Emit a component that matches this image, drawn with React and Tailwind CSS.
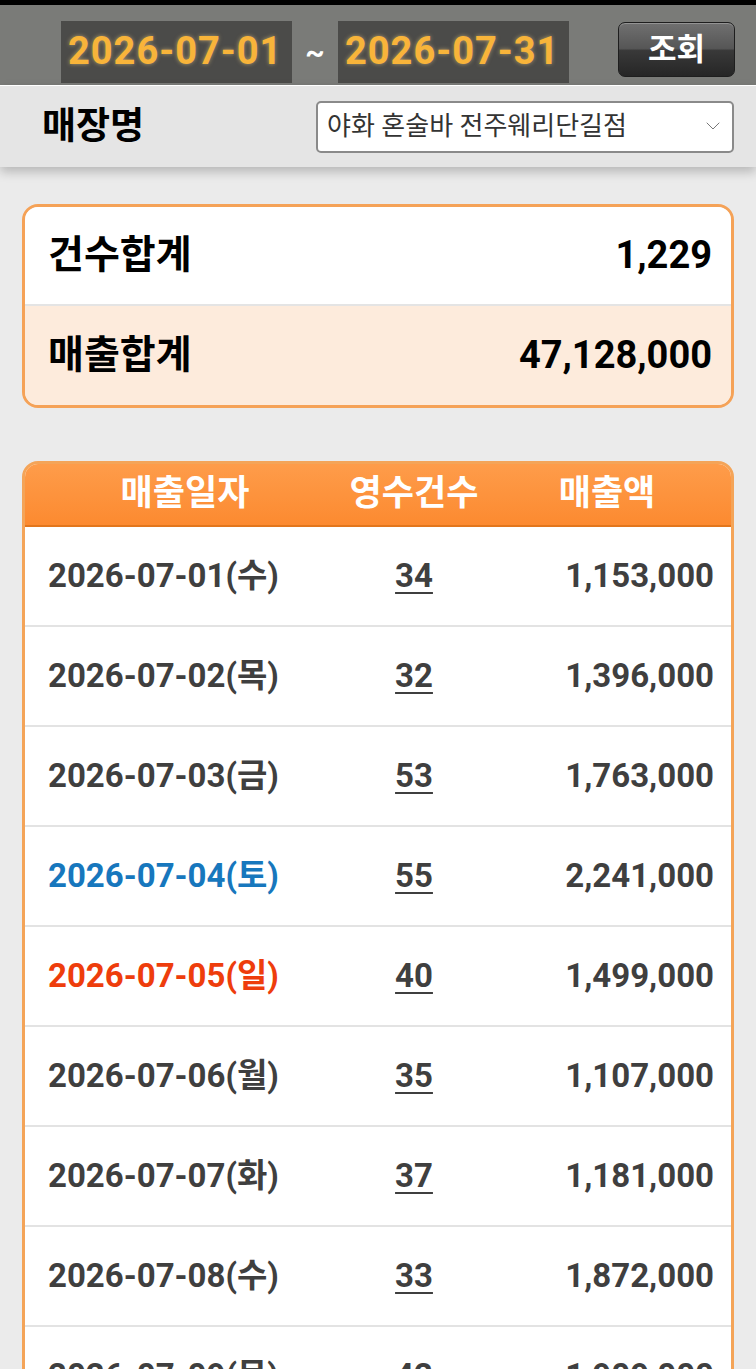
import { ChevronDown } from "lucide-react";

const rows = [
  { date: "2026-07-01(수)", count: 34, amount: "1,153,000" },
  { date: "2026-07-02(목)", count: 32, amount: "1,396,000" },
  { date: "2026-07-03(금)", count: 53, amount: "1,763,000" },
  { date: "2026-07-04(토)", count: 55, amount: "2,241,000", day: "sat" },
  { date: "2026-07-05(일)", count: 40, amount: "1,499,000", day: "sun" },
  { date: "2026-07-06(월)", count: 35, amount: "1,107,000" },
  { date: "2026-07-07(화)", count: 37, amount: "1,181,000" },
  { date: "2026-07-08(수)", count: 33, amount: "1,872,000" },
  { date: "2026-07-09(목)", count: 42, amount: "1,909,000" },
];

const dateColor = (day) => {
  if (day === "sat") return "text-[#1777bd]";
  if (day === "sun") return "text-[#ee3d0c]";
  return "text-[#3f3f3f]";
};

const DateBox = ({ value }) => (
  <div className="w-[231px] h-[62px] bg-[#4b4b49] flex items-center pl-[7px] pb-[3px] overflow-hidden">
    <span className="whitespace-nowrap text-[38px] font-bold tracking-[1px] text-[#f8b43a] leading-none [text-shadow:0_0_4px_rgba(255,220,140,0.55)]">
      {value}
    </span>
  </div>
);

const App = () => {
  return (
    <div className="min-h-screen bg-[#ebebeb] font-[Roboto,'Noto_Sans_CJK_KR',sans-serif]">
      {/* 기간 선택 */}
      <div className="h-[85px] border-t-[5px] border-black bg-[#7a7b78] flex items-start pt-[16px] pl-[61px]">
        <DateBox value="2026-07-01" />
        <div className="w-[46px] h-[62px] flex items-center justify-center text-white text-[30px] font-bold">
          ~
        </div>
        <DateBox value="2026-07-31" />
        <button
          type="button"
          className="ml-[49px] mt-[1px] w-[117px] h-[55px] rounded-[7px] border border-[#1e1e1e] bg-[linear-gradient(to_bottom,#707070_0%,#565656_48%,#393939_52%,#262626_100%)] text-white text-[31px] font-bold leading-none flex items-center justify-center shadow-[inset_0_1px_0_rgba(255,255,255,0.25)]"
        >
          조회
        </button>
      </div>

      {/* 매장 선택 */}
      <div className="relative z-10 h-[82px] border-t border-white bg-[#e5e5e5] shadow-[0_5px_10px_rgba(0,0,0,0.22)] flex items-center justify-between pl-[42px] pr-[22px]">
        <span className="text-[37px] font-bold text-black">매장명</span>
        <div className="relative w-[418px] h-[52px]">
          <select className="appearance-none w-full h-full rounded-[5px] border-2 border-[#8a8a8a] bg-white pl-[9px] text-[26px] text-[#333] outline-none">
            <option>야화 혼술바 전주웨리단길점</option>
          </select>
          <ChevronDown
            className="absolute right-[9px] top-[13px] w-[24px] h-[24px] text-[#777] pointer-events-none"
            strokeWidth={1}
          />
        </div>
      </div>

      <div className="px-[22px] pt-[37px] pb-10">
        {/* 합계 */}
        <div className="rounded-[16px] border-[3px] border-[#f5a257] overflow-hidden">
          <div className="h-[99px] bg-white flex items-center justify-between pl-[23px] pr-[19px] border-b-2 border-[#e4e4e4]">
            <span className="text-[39px] font-bold text-black">건수합계</span>
            <span className="text-[38px] font-bold text-black">1,229</span>
          </div>
          <div className="h-[99px] bg-[#fdebdc] flex items-center justify-between pl-[23px] pr-[19px]">
            <span className="text-[39px] font-bold text-black">매출합계</span>
            <span className="text-[38px] font-bold text-black">47,128,000</span>
          </div>
        </div>

        {/* 일자별 목록 */}
        <div className="mt-[53px] rounded-t-[16px] border-[3px] border-[#f4a458] overflow-hidden bg-white">
          <div className="h-[63px] grid grid-cols-[320px_138px_248px] items-center bg-[linear-gradient(to_bottom,#fe9c4a,#fc8a30)] border-b-2 border-[#e2761c] text-white text-[35px] font-bold">
            <span className="text-center">매출일자</span>
            <span className="text-center">영수건수</span>
            <span className="text-center">매출액</span>
          </div>
          {rows.map((r) => (
            <div
              key={r.date}
              className="h-[100px] grid grid-cols-[320px_138px_248px] items-center border-b-2 border-[#e3e3e3] text-[33px] font-bold"
            >
              <span className={`pl-[23px] whitespace-nowrap ${dateColor(r.day)}`}>{r.date}</span>
              <span className="text-center text-[#3f3f3f] underline decoration-2 underline-offset-[5px]">
                {r.count}
              </span>
              <span className="text-right pr-[17px] text-[#3f3f3f]">{r.amount}</span>
            </div>
          ))}
        </div>
      </div>
    </div>
  );
};

export default App;
